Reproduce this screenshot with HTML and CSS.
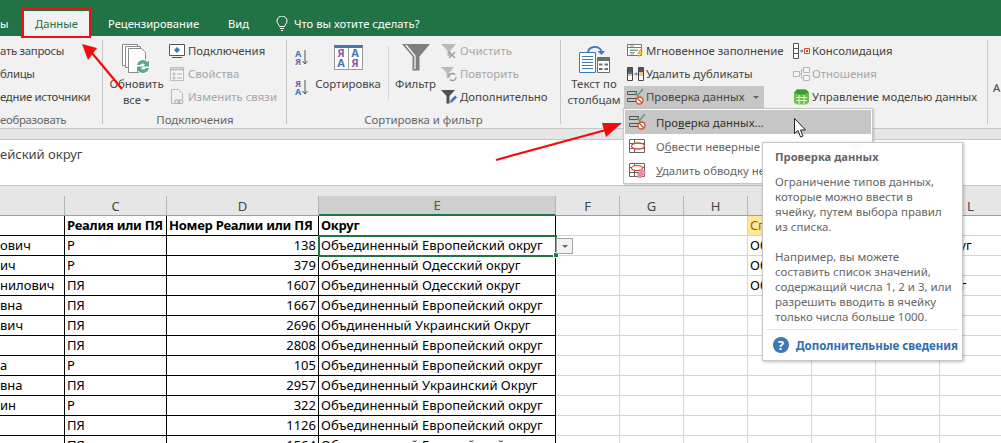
FILE: index.html
```html
<!DOCTYPE html>
<html lang="ru">
<head>
    <meta charset="UTF-8">
    <title>Проверка данных</title>
    <link rel="stylesheet" href="styles.css">
</head>
<body>
<div class="app">

    <!-- tabs -->
    <div class="tabs">
        <span class="tab tab-cut">ы</span>
        <span class="tab tab-active">Данные</span>
        <span class="tab tab-review">Рецензирование</span>
        <span class="tab tab-view">Вид</span>
        <svg class="bulb" width="12" height="15" viewBox="0 0 12 15"><path d="M3.500 10.500C3 8.500 1 7.500 1 5a5 5 0 0 1 10 0c0 2.500-2 3.500-2.500 5.500zM4 12.500h4M5 14.500h2" fill="none" stroke="#fff"/></svg>
        <span class="tab tab-search">Что вы хотите сделать?</span>
    </div>

    <!-- ribbon -->
    <div class="ribbon">
        <div class="group group-get">
            <div class="group-body">
                <div class="col">
                    <div class="item">ать запросы</div>
                    <div class="item">блицы</div>
                    <div class="item">едние источники</div>
                </div>
            </div>
            <div class="group-label label-left">еобразовать</div>
        </div>

        <div class="group group-conn">
            <div class="group-body">
                <div class="big big-refresh">
                    <svg class="big-icon" width="31" height="30" viewBox="0 0 31 30">
                        <g fill="#fff" stroke="#8a8a8a">
                            <path d="M1.500.5h15v21h-15z"/>
                            <path d="M4.500 2.500h15v21h-15z"/>
                            <path d="M7.500 4.500h13l4 4v20h-17z"/>
                        </g>
                        <circle cx="22" cy="22.500" r="7.500" fill="#fff" opacity=".9"/>
                        <path d="M16 21a6.200 6.200 0 0 1 10.500-3l1.500-1.500v6h-6l2-2a3.500 3.500 0 0 0-5 .5zM28 24a6.200 6.200 0 0 1-10.500 3L16 28.500v-6h6l-2 2a3.500 3.500 0 0 0 5-.5z" fill="#5fa78a"/>
                    </svg>
                    <div>Обновить</div>
                    <div>все <span class="caret"></span></div>
                </div>
                <div class="col">
                    <div class="item">
                        <svg class="icon" width="16" height="16" viewBox="0 0 16 16"><path d="M.5 1.500h15v11H.5zM3 14.500h10" fill="#fff" stroke="#555"/><path d="M8 4l3 3-3 3-3-3z" fill="#3f78b5"/></svg>
                        Подключения
                    </div>
                    <div class="item off">
                        <svg class="icon" width="16" height="16" viewBox="0 0 16 16"><path d="M1.500 1.500h13v13h-13z" fill="#f7f7f7" stroke="#bbb"/><path d="M1.500 3.500h13" stroke="#bbb" stroke-width="2"/><path d="M4 7h2v2H4zM4 11h2v2H4z" fill="none" stroke="#aaa" stroke-width=".8"/><path d="M8 8h5M8 12h5" stroke="#aaa"/></svg>
                        Свойства
                    </div>
                    <div class="item off">
                        <svg class="icon" width="16" height="16" viewBox="0 0 16 16"><path d="M2.500.5h7l4 4v6M2.500.5v14h3" fill="none" stroke="#b5b5b5"/><rect x="5.500" y="11" width="5" height="3.500" rx="1.700" fill="none" stroke="#a0a0a0"/><rect x="9" y="11" width="5" height="3.500" rx="1.700" fill="none" stroke="#a0a0a0"/></svg>
                        Изменить связи
                    </div>
                </div>
            </div>
            <div class="group-label">Подключения</div>
        </div>

        <div class="group group-sort">
            <div class="group-body">
                <div class="sort-small">
                    <div class="az">
                        <span class="az-letters"><b class="blue">А</b><b class="purple">Я</b></span>
                        <svg width="6" height="15" viewBox="0 0 6 15"><path d="M3 0v14M.5 11L3 14l2.500-3" fill="none" stroke="#555"/></svg>
                    </div>
                    <div class="az">
                        <span class="az-letters"><b class="purple">Я</b><b class="blue">А</b></span>
                        <svg width="6" height="15" viewBox="0 0 6 15"><path d="M3 0v14M.5 11L3 14l2.500-3" fill="none" stroke="#555"/></svg>
                    </div>
                </div>
                <div class="big big-sort">
                    <div class="sort-icon">
                        <span><b class="purple">Я</b><b class="blue">А</b></span>
                        <span><b class="blue">А</b><b class="purple">Я</b></span>
                    </div>
                    <div>Сортировка</div>
                </div>
                <div class="vsep"></div>
                <div class="big big-filter">
                    <svg class="big-icon" width="28" height="27" viewBox="0 0 28 27"><path d="M0 0h28L17.500 12.500V26.500h-7V12.500z" fill="#7f7f7f"/><path d="M4 1l9 11v13" fill="none" stroke="#fff" stroke-width="1.200"/></svg>
                    <div>Фильтр</div>
                </div>
                <div class="col col-filter">
                    <div class="item off">
                        <svg class="icon" width="16" height="16" viewBox="0 0 16 16"><path d="M0 1h15L9.500 7.500V13h-3V7.500z" fill="#b9b9b9"/><path d="M8 9l6 6M14 9l-6 6" stroke="#a0a0a0" stroke-width="1.500"/></svg>
                        Очистить
                    </div>
                    <div class="item off">
                        <svg class="icon" width="16" height="16" viewBox="0 0 16 16"><path d="M0 1h13L8.500 6.500V12h-3V6.500z" fill="#b9b9b9"/><circle cx="11.500" cy="11" r="3.500" fill="none" stroke="#9a9a9a" stroke-width="1.300" stroke-dasharray="8 3"/></svg>
                        Повторить
                    </div>
                    <div class="item">
                        <svg class="icon" width="16" height="16" viewBox="0 0 16 16"><path d="M0 1h14L8.500 7v7.500h-3V7z" fill="#505050"/><path d="M9 14l.7-3 4.500-4.500 1.800 2-4.500 4.500z" fill="#3f78b5"/></svg>
                        Дополнительно
                    </div>
                </div>
            </div>
            <div class="group-label">Сортировка и фильтр</div>
        </div>

        <div class="group group-tools">
            <div class="group-body">
                <div class="big big-text">
                    <svg class="big-icon" width="31" height="30" viewBox="0 0 31 30">
                        <path d="M.5 8.500h16v20H.5z" fill="#fff" stroke="#3f78b5"/>
                        <path d="M3 12.500h11M3 15.500h11M3 18.500h11M3 21.500h11M3 24.500h11" stroke="#3f78b5"/>
                        <path d="M18.500 13.500h12v15h-12z" fill="#fff" stroke="#6d6d6d"/>
                        <path d="M19 14h11v3H19zM20 19.500h3.500v2H20zM25.500 19.500h3.500v2h-3.500zM20 24h3.500v2H20zM25.500 24h3.500v2h-3.500z" fill="#6d6d6d"/>
                        <path d="M9 8C10 2.500 19 .5 22.500 7" fill="none" stroke="#3f78b5" stroke-width="1.800"/>
                        <path d="M18.500 7h7.500l-3.500 4z" fill="#3f78b5"/>
                    </svg>
                    <div>Текст по</div>
                    <div>столбцам</div>
                </div>
                <div class="col col-data">
                    <div class="item">
                        <svg class="icon" width="17" height="16" viewBox="0 0 17 16"><path d="M.5 1.500h14v11H.5z" fill="#fff" stroke="#777"/><path d="M.5 4.500h14" stroke="#777"/><path d="M3 2.500h4v1H3zM3 6.500h8v1.500H3z" fill="#6fa58a"/><path d="M3 9.500h5M3 11h4" stroke="#999"/><path d="M13 6l-3 5h2.500l-1.500 4.500 5-6.500h-3l2-3z" fill="#f0b030"/></svg>
                        Мгновенное заполнение
                    </div>
                    <div class="item">
                        <svg class="icon" width="17" height="16" viewBox="0 0 17 16"><path d="M.5 1.500h5v13h-5zM11.500 1.500h5v13h-5z" fill="#fff" stroke="#444"/><path d="M1 2h4v4H1zM12 2h4v4h-4z" fill="#555"/><path d="M1 6h4v4H1zM12 6h4v4h-4z" fill="#f1c27d"/><path d="M1 6h4v2H1z" fill="#3f78b5"/><path d="M7 8h3M9 6.500L10.500 8 9 9.500" fill="none" stroke="#3f78b5"/></svg>
                        Удалить дубликаты
                    </div>
                    <div class="item item-on">
                        <svg class="icon" width="17" height="16" viewBox="0 0 17 16"><path d="M.5 2.500h9v3h-9zM.5 9.500h9v3h-9z" fill="none" stroke="#555"/><path d="M8 4l2.500 2.500L16 0" fill="none" stroke="#5f9e85" stroke-width="1.600"/><circle cx="12.500" cy="11.500" r="3.500" fill="#fff" stroke="#d2492a" stroke-width="1.300"/><path d="M10 9l5 5" stroke="#d2492a" stroke-width="1.300"/></svg>
                        Проверка данных
                        <span class="caret caret-data"></span>
                    </div>
                </div>
                <div class="col col-model">
                    <div class="item">
                        <svg class="icon" width="17" height="16" viewBox="0 0 17 16"><path d="M.5.500h5v15h-5zM.5 5.500h5M.5 10.500h5" fill="#fff" stroke="#555"/><path d="M7 8h3M8.500 6.500L10 8 8.500 9.500" fill="none" stroke="#3f78b5"/><path d="M11.500 5.500h5v5h-5z" fill="#fff" stroke="#d2492a"/><path d="M13 7h2v2h-2z" fill="#d2492a"/></svg>
                        Консолидация
                    </div>
                    <div class="item off">
                        <svg class="icon" width="17" height="16" viewBox="0 0 17 16"><path d="M.5 5.500h6v5h-6zM10.500 1.500h6v5h-6zM10.500 9.500h6v5h-6zM6.500 8h2M8.500 4v8h2M8.500 4h2" fill="#f5f5f5" stroke="#b5b5b5"/></svg>
                        Отношения
                    </div>
                    <div class="item">
                        <svg class="icon" width="17" height="16" viewBox="0 0 17 16"><path d="M1 3.500L4 .5h9l3 3v10l-3 2H4l-3-2z" fill="#6cc04a"/><path d="M1 3.500c3 2.500 12 2.500 15 0L13 .5H4z" fill="#3d9a3a"/><path d="M6 6v9M11 6v9M3 8.500h11M3 11.500h11" stroke="#e4f5dc"/></svg>
                        Управление моделью данных
                    </div>
                </div>
            </div>
            <div class="group-label"></div>
        </div>

        <div class="group group-last">
            <div class="group-body"><span class="cut-a">А</span></div>
        </div>
    </div>

    <!-- formula bar -->
    <div class="band"></div>
    <div class="formula">ейский округ</div>
    <div class="band band-top"></div>

    <!-- sheet -->
    <table class="sheet">
        <colgroup>
            <col class="w-b"><col class="w-c"><col class="w-d"><col class="w-e">
            <col class="w-n"><col class="w-n"><col class="w-n"><col class="w-n"><col class="w-n"><col class="w-n"><col class="w-l">
        </colgroup>
        <thead>
            <tr>
                <th></th><th>C</th><th>D</th><th class="head-on">E</th><th>F</th><th>G</th><th>H</th><th></th><th></th><th></th><th>L</th>
            </tr>
        </thead>
        <tbody>
            <tr class="row-head">
                <td class="bk"></td><td class="bk">Реалия или ПЯ</td><td class="bk">Номер Реалии или ПЯ</td><td class="bk">Округ</td>
                <td></td><td></td><td></td><td class="yellow">Список округов</td><td></td><td></td><td></td>
            </tr>
            <tr>
                <td class="bk">ович</td><td class="bk">Р</td><td class="bk num">138</td>
                <td class="bk active">Объединенный Европейский округ<span class="handle"></span><span class="drop"><span class="caret"></span></span></td>
                <td></td><td></td><td></td><td>Объединенный Европейский округ</td><td></td><td></td><td></td>
            </tr>
            <tr>
                <td class="bk">ич</td><td class="bk">Р</td><td class="bk num">379</td><td class="bk">Объединенный Одесский округ</td>
                <td></td><td></td><td></td><td>Объединенный Одесский округ</td><td></td><td></td><td></td>
            </tr>
            <tr>
                <td class="bk">нилович</td><td class="bk">ПЯ</td><td class="bk num">1607</td><td class="bk">Объединенный Одесский округ</td>
                <td></td><td></td><td></td><td>Объединенный Украинский Округ</td><td></td><td></td><td></td>
            </tr>
            <tr>
                <td class="bk">вна</td><td class="bk">ПЯ</td><td class="bk num">1667</td><td class="bk">Объединенный Европейский округ</td>
                <td></td><td></td><td></td><td></td><td></td><td></td><td></td>
            </tr>
            <tr>
                <td class="bk">вич</td><td class="bk">ПЯ</td><td class="bk num">2696</td><td class="bk">Объдиненный Украинский Округ</td>
                <td></td><td></td><td></td><td></td><td></td><td></td><td></td>
            </tr>
            <tr>
                <td class="bk"></td><td class="bk">ПЯ</td><td class="bk num">2808</td><td class="bk">Объединенный Европейский округ</td>
                <td></td><td></td><td></td><td></td><td></td><td></td><td></td>
            </tr>
            <tr>
                <td class="bk">а</td><td class="bk">Р</td><td class="bk num">105</td><td class="bk">Объединенный Европейский округ</td>
                <td></td><td></td><td></td><td></td><td></td><td></td><td></td>
            </tr>
            <tr>
                <td class="bk">вна</td><td class="bk">ПЯ</td><td class="bk num">2957</td><td class="bk">Объединенный Украинский Округ</td>
                <td></td><td></td><td></td><td></td><td></td><td></td><td></td>
            </tr>
            <tr>
                <td class="bk">ин</td><td class="bk">Р</td><td class="bk num">322</td><td class="bk">Объединенный Европейский округ</td>
                <td></td><td></td><td></td><td></td><td></td><td></td><td></td>
            </tr>
            <tr>
                <td class="bk"></td><td class="bk">ПЯ</td><td class="bk num">1126</td><td class="bk">Объединенный Европейский округ</td>
                <td></td><td></td><td></td><td></td><td></td><td></td><td></td>
            </tr>
            <tr>
                <td class="bk"></td><td class="bk">ПЯ</td><td class="bk num">1564</td><td class="bk">Объединенный Европейский округ</td>
                <td></td><td></td><td></td><td></td><td></td><td></td><td></td>
            </tr>
        </tbody>
    </table>

    <!-- dropdown menu -->
    <div class="menu">
        <div class="menu-item menu-on">
            <svg width="17" height="16" viewBox="0 0 17 16"><path d="M.5 2.500h9v3h-9zM.5 9.500h9v3h-9z" fill="none" stroke="#555"/><path d="M8 4l2.500 2.500L16 0" fill="none" stroke="#5f9e85" stroke-width="1.600"/><circle cx="12.500" cy="11.500" r="3.500" fill="#fff" stroke="#d2492a" stroke-width="1.300"/><path d="M10 9l5 5" stroke="#d2492a" stroke-width="1.300"/></svg>
            <span>Про<u>в</u>ерка данных...</span>
        </div>
        <div class="menu-item">
            <svg width="17" height="16" viewBox="0 0 17 16"><path d="M.5 1.500h15v13H.5zM.5 5.500h15M.5 10.500h15M5.500 1.500v13" fill="#fff" stroke="#666"/><ellipse cx="9" cy="8" rx="6.500" ry="3" fill="#fff" stroke="#d2492a" stroke-width="1.300"/></svg>
            <span>О<u>б</u>вести неверные данные</span>
        </div>
        <div class="menu-item">
            <svg width="17" height="16" viewBox="0 0 17 16"><path d="M.5 1.500h15v13H.5zM.5 5.500h15M.5 10.500h15M5.500 1.500v13" fill="#fff" stroke="#666"/><ellipse cx="8" cy="6" rx="5.500" ry="2.500" fill="#fff" stroke="#d2492a" stroke-width="1.200"/><path d="M8 12l5-5 4 3.500-5 5.500H9z" fill="#ef8aa5"/></svg>
            <span><u>У</u>далить обводку неверных данных</span>
        </div>
    </div>

    <!-- tooltip -->
    <div class="tip">
        <div class="tip-title">Проверка данных</div>
        <p>Ограничение типов данных,<br>которые можно ввести в<br>ячейку, путем выбора правил<br>из списка.</p>
        <p>Например, вы можете<br>составить список значений,<br>содержащий числа 1, 2 и 3, или<br>разрешить вводить в ячейку<br>только числа больше 1000.</p>
        <div class="tip-foot">
            <span class="help">?</span>
            <span class="tip-link">Дополнительные сведения</span>
        </div>
    </div>

    <!-- annotations on top of the screenshot -->
    <div class="redbox"></div>
    <svg class="marks" width="1001" height="443" viewBox="0 0 1001 443">
        <path d="M122 89L92 53" stroke="#f20c0c" stroke-width="2.200" fill="none"/>
        <path d="M82 44l15 4-9 12z" fill="#f20c0c"/>
        <path d="M496 160L606 130" stroke="#f20c0c" stroke-width="2.200" fill="none"/>
        <path d="M622 123l-16 14-4-14z" fill="#f20c0c"/>
        <path d="M794.500 118.500v15l3.500-3 2.500 6.500 2.500-1-2.500-6h5z" fill="#fff" stroke="#222"/>
    </svg>
</div>
</body>
</html>
```

FILE: styles.css
```css
html, body {
    margin: 0;
    background: #fff;
}

.app {
    position: relative;
    width: 1001px;
    height: 443px;
    overflow: hidden;
    font-family: "Noto Sans", sans-serif;
    font-size: 11.400px;
    color: #444;
}

/* tabs */
.tabs {
    display: flex;
    align-items: flex-end;
    height: 36px;
    background: #217346;
    color: #fff;
}

.tab {
    height: 24px;
    line-height: 24px;
    font-size: 11.200px;
    white-space: nowrap;
}

.tab-cut { width: 24px; }

.tab-active {
    width: 65px;
    height: 25px;
    line-height: 25px;
    text-align: center;
    background: #f1f1f1;
    color: #217346;
}

.tab-review {
    width: 91px;
    margin-left: 19px;
}

.tab-view {
    width: 20px;
    margin-left: 29px;
}

.bulb {
    margin-left: 28px;
    margin-bottom: 5px;
}

.tab-search { margin-left: 6px; }

/* ribbon */
.ribbon {
    display: flex;
    height: 93px;
    box-sizing: border-box;
    background: #f1f1f1;
    border-bottom: 1px solid #c6c6c6;
    white-space: nowrap;
}

.group {
    display: flex;
    flex-direction: column;
    height: 84px;
    margin-top: 4px;
    border-right: 1px solid #c6c6c6;
}

.group-get { width: 102px; }
.group-conn { width: 182px; margin-left: 1px; }
.group-sort { width: 273px; }
.group-tools { width: 426px; }
.group-last { border-right: none; }

.group-get .item,
.group-get .group-label { letter-spacing: -.3px; }

.group-body {
    display: flex;
    height: 72px;
}

.group-label {
    height: 16px;
    line-height: 16px;
    margin-bottom: -4px;
    text-align: center;
    color: #666;
}

.label-left { text-align: left; }

.col {
    display: flex;
    flex-direction: column;
}

.item {
    display: flex;
    align-items: center;
    height: 23px;
    line-height: 22px;
    padding-bottom: 1px;
    box-sizing: border-box;
    white-space: nowrap;
}

.icon {
    flex: none;
    margin-right: 3px;
}

.off { color: #a6a6a6; }

.big {
    display: flex;
    flex-direction: column;
    align-items: center;
    padding-top: 4px;
    line-height: 16px;
    box-sizing: border-box;
}

.big-icon {
    display: block;
    margin-bottom: 2px;
}

.big-filter .big-icon { margin-bottom: 5px; }

.caret {
    display: inline-block;
    width: 0;
    height: 0;
    border-left: 3px solid transparent;
    border-right: 3px solid transparent;
    border-top: 3px solid #666;
    vertical-align: middle;
}

.big-refresh { width: 65px; }

.group-sort .col-filter { margin-left: 5px; }

.sort-small {
    display: flex;
    flex-direction: column;
    gap: 14px;
    width: 20px;
    padding: 10px 0 0 8px;
}

.az {
    display: flex;
    align-items: flex-start;
    gap: 1px;
    height: 16px;
}

.az-letters {
    display: flex;
    flex-direction: column;
    font-size: 9px;
    line-height: 8px;
}

.blue { color: #3f78b5; font-weight: 700; }
.purple { color: #8a5aa8; font-weight: 700; }

.big-sort { width: 66px; }

.sort-icon {
    display: flex;
    width: 29px;
    height: 25px;
    margin-top: 1px;
    margin-bottom: 6px;
    box-sizing: border-box;
    background: #fff;
    border: 1px solid #9a9a9a;
    border-top: 3px solid #3f78b5;
}

.sort-icon span {
    display: flex;
    flex: 1;
    flex-direction: column;
    align-items: center;
    font-size: 11px;
    line-height: 10px;
}

.sort-icon span + span { border-left: 1px solid #9a9a9a; }

.vsep {
    width: 1px;
    height: 54px;
    margin: 6px 6px 0 7px;
    background: #d4d4d4;
}

.big-filter { width: 41px; }

.big-text { width: 60px; margin-left: 3px; }

.col-data { width: 140px; }

.col-data .item { padding-left: 3px; }

.col-data .icon,
.col-model .icon { margin-right: 2px; }

.item-on { background: #c6c6c6; }

.caret-data {
    margin-left: auto;
    margin-right: 5px;
}

.col-model { margin-left: 26px; }

.col-model .item { padding-left: 3px; }

.cut-a {
    margin: 40px 0 0 5px;
    line-height: 16px;
}

/* formula bar */
.band {
    height: 10px;
    background: #e6e6e6;
}

.formula {
    height: 45px;
    line-height: 28px;
    background: #fff;
    border-top: 1px solid #c6c6c6;
    border-bottom: 1px solid #c6c6c6;
    font-size: 13px;
}

/* sheet */
.sheet {
    width: 1001px;
    table-layout: fixed;
    border-collapse: separate;
    border-spacing: 0;
    font-family: "Noto Sans", sans-serif;
    font-size: 13px;
    color: #000;
}

.w-b { width: 65px; }
.w-c { width: 102px; }
.w-d { width: 152px; }
.w-e { width: 237px; }
.w-n { width: 64px; }
.w-l { width: 62px; }

.sheet th {
    height: 20px;
    padding: 0;
    box-sizing: border-box;
    background: #e6e6e6;
    border-right: 1px solid #b5b5b5;
    border-bottom: 1px solid #9f9f9f;
    font-weight: 400;
    color: #444;
    text-align: center;
}

.sheet th.head-on {
    background: #cfcfcf;
    color: #217346;
    border-bottom: 2px solid #217346;
}

.sheet td {
    height: 20px;
    padding: 0 2px 1px;
    box-sizing: border-box;
    border-right: 1px solid #d4d4d4;
    border-bottom: 1px solid #d4d4d4;
    white-space: nowrap;
    line-height: 17px;
}

.sheet td.bk {
    overflow: hidden;
    border-right-color: #000;
    border-bottom-color: #000;
}

.sheet td.bk:first-child { padding-left: 0; }

.sheet td.num { text-align: right; }

.row-head td {
    font-weight: 700;
    letter-spacing: -.25px;
}

.row-head td.yellow {
    background: #ffe699;
    color: #9c6500;
    font-weight: 400;
    overflow: hidden;
}

.sheet td.active {
    position: relative;
    overflow: visible;
    outline: 2px solid #217346;
    outline-offset: -1px;
}

.handle {
    position: absolute;
    right: -4px;
    bottom: -3px;
    width: 4px;
    height: 4px;
    background: #217346;
    border: 1px solid #fff;
}

.drop {
    position: absolute;
    left: 100%;
    top: 2px;
    display: flex;
    align-items: center;
    justify-content: center;
    width: 17px;
    height: 16px;
    margin-left: 1px;
    box-sizing: border-box;
    background: #f2f2f2;
    border: 1px solid #a6a6a6;
}

/* dropdown menu */
.menu {
    position: absolute;
    left: 623px;
    top: 108px;
    width: 250px;
    height: 76px;
    padding: 1px;
    box-sizing: border-box;
    overflow: hidden;
    background: #fff;
    border: 1px solid #c6c6c6;
    box-shadow: 1px 1px 2px rgba(0, 0, 0, .2);
    white-space: nowrap;
}

.menu-item {
    display: flex;
    align-items: center;
    height: 24px;
    padding-left: 4px;
    color: #666;
}

.menu-item svg {
    flex: none;
    margin-right: 10px;
}

.menu-on {
    background: #c6c6c6;
    color: #333;
}

/* tooltip */
.tip {
    position: absolute;
    left: 762px;
    top: 142px;
    width: 201px;
    height: 219px;
    padding: 6px 8px 0 12px;
    box-sizing: border-box;
    background: #fff;
    border: 1px solid #c6c6c6;
    box-shadow: 1px 1px 3px rgba(0, 0, 0, .25);
    color: #666;
    font-size: 11.500px;
    line-height: 15px;
    white-space: nowrap;
}

.tip-title {
    margin-bottom: 10px;
    font-size: 11.200px;
    font-weight: 700;
}

.tip p { margin: 0 0 15px; }

.tip-foot {
    display: flex;
    align-items: center;
    gap: 7px;
    margin: -10px -4px 0 -8px;
    padding: 7px 0 0 6px;
    border-top: 1px solid #e1e1e1;
}

.help {
    width: 16px;
    height: 16px;
    border-radius: 50%;
    background: #3f78b5;
    color: #fff;
    font-size: 13px;
    font-weight: 700;
    line-height: 16px;
    text-align: center;
}

.tip-link {
    color: #2f6db0;
    font-weight: 700;
}

/* annotations */
.redbox {
    position: absolute;
    left: 21px;
    top: 8px;
    width: 70px;
    height: 30px;
    box-sizing: border-box;
    border: 2px solid #ee1111;
}

.marks {
    position: absolute;
    left: 0;
    top: 0;
    pointer-events: none;
}
```
